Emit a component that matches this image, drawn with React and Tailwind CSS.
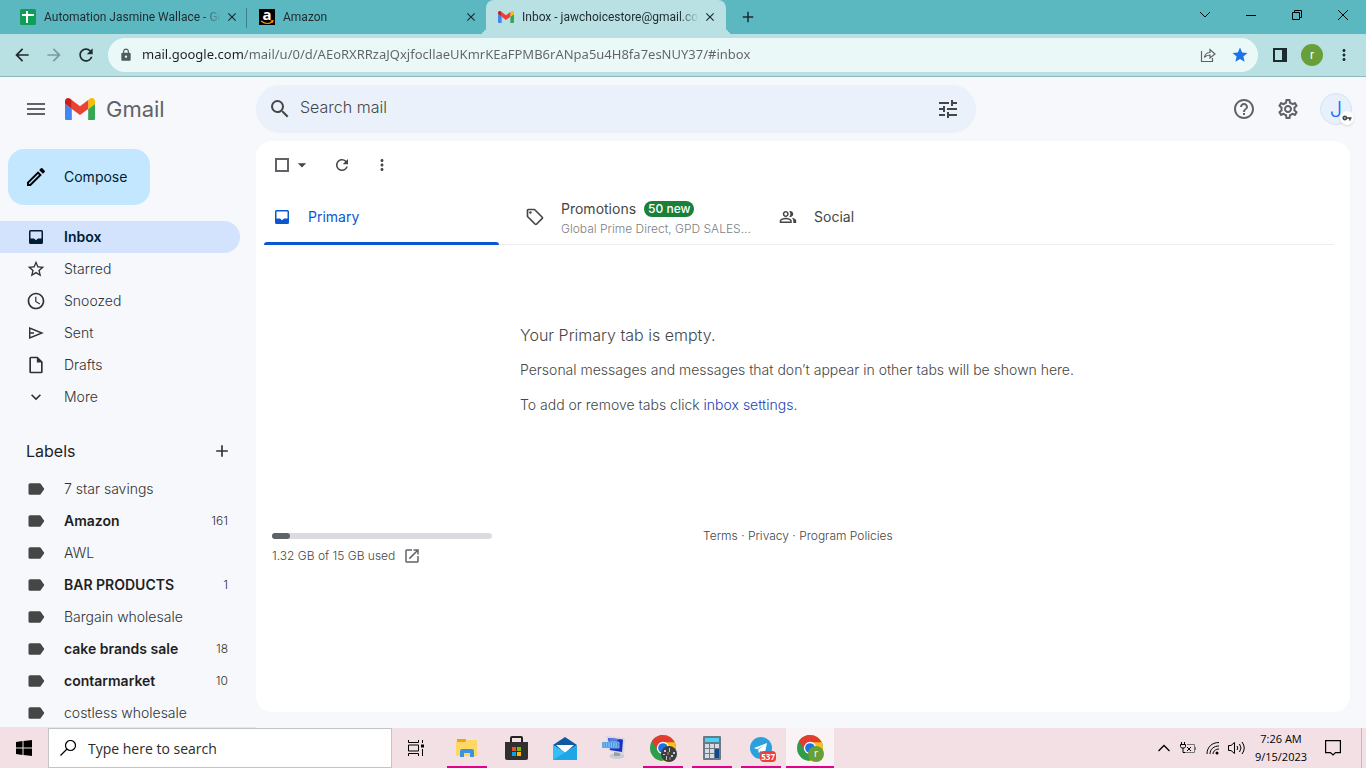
import React, { useState } from 'react';
import clsx from 'clsx';
import {
  MdAdd,
  MdArrowBack,
  MdArrowDropDown,
  MdArrowForward,
  MdClose,
  MdExpandMore,
  MdHelpOutline,
  MdLabel,
  MdLock,
  MdMenu,
  MdMoreVert,
  MdOpenInNew,
  MdOutlineInsertDriveFile,
  MdOutlineLocalOffer,
  MdOutlineModeEdit,
  MdOutlinePeopleAlt,
  MdOutlineSettings,
  MdRefresh,
  MdSchedule,
  MdSearch,
  MdStar,
  MdStarBorder,
  MdTune,
  MdVpnKey,
} from 'react-icons/md';

const InboxIcon = ({ size }) => (
  <svg viewBox="0 0 20 20" width={size} height={size} fill="currentColor" aria-hidden="true">
    <path fillRule="evenodd" d="M4.500 3h11A1.500 1.500 0 0 1 17 4.500v11a1.500 1.500 0 0 1-1.500 1.500h-11A1.500 1.500 0 0 1 3 15.500v-11A1.500 1.500 0 0 1 4.500 3zm0 1.500v7H8l2 1.700 2-1.700h3.500v-7z" />
  </svg>
);

const SendIcon = ({ size }) => (
  <svg viewBox="0 0 20 20" width={size} height={size} fill="none" stroke="currentColor" strokeWidth="1.4" aria-hidden="true">
    <path d="M3.700 5v10L16 10zM3.700 10H8" />
  </svg>
);

const folders = [
  { name: 'Inbox', icon: InboxIcon },
  { name: 'Starred', icon: MdStarBorder },
  { name: 'Snoozed', icon: MdSchedule },
  { name: 'Sent', icon: SendIcon },
  { name: 'Drafts', icon: MdOutlineInsertDriveFile },
  { name: 'More', icon: MdExpandMore },
];

const labels = [
  { name: '7 star savings' },
  { name: 'Amazon', unread: 161 },
  { name: 'AWL' },
  { name: 'BAR PRODUCTS', unread: 1 },
  { name: 'Bargain wholesale' },
  { name: 'cake brands sale', unread: 18 },
  { name: 'contarmarket', unread: 10 },
  { name: 'costless wholesale' },
];

const GmailLogo = ({ className }) => (
  <svg viewBox="52 42 88 66" className={className} aria-hidden="true">
    <path fill="#4285f4" d="M58 108h14V74L52 59v43c0 3.32 2.69 6 6 6" />
    <path fill="#34a853" d="M120 108h14c3.32 0 6-2.69 6-6V59l-20 15" />
    <path fill="#fbbc04" d="M120 48v26l20-15v-8c0-7.42-8.47-11.65-14.4-7.2" />
    <path fill="#ea4335" d="M72 74V48l24 18 24-18v26L96 92" />
    <path fill="#c5221f" d="M52 51v8l20 15V48l-5.6-4.2c-5.94-4.45-14.4-.22-14.4 7.2" />
  </svg>
);

const SheetsIcon = () => (
  <svg viewBox="0 0 16 16" className="size-4 shrink-0" aria-hidden="true">
    <rect width="16" height="16" rx="1.5" fill="#0f9d58" />
    <path d="M2 6h12M7 2v12" stroke="#fff" strokeWidth="2" />
  </svg>
);

const AmazonIcon = () => (
  <svg viewBox="0 0 16 16" className="size-4 shrink-0" aria-hidden="true">
    <rect width="16" height="16" fill="#000" />
    <text x="8" y="11" textAnchor="middle" fontSize="15" fontWeight="700" fill="#fff" fontFamily="Open Sans, sans-serif">a</text>
    <path d="M2 12c4 3 8 3 11 1M11.5 12l2.5-.2-.8 2" fill="none" stroke="#f90" strokeWidth="1.2" />
  </svg>
);

const ChromeIcon = () => (
  <svg viewBox="4 4 40 40" className="size-[26px]" aria-hidden="true">
    <circle cx="24" cy="24" r="20" fill="#2e9e4a" />
    <path fill="#fbc116" d="M24 4v20l8 4-8.8 16h.8c11 0 20-9 20-20S35 4 24 4z" />
    <path fill="#e33b2e" d="M41.8 15H24v13l-3-1-5 1.1L7.1 13.3C10.7 7.7 16.9 4 24 4c7.8 0 14.6 4.5 17.8 11z" />
    <circle cx="24" cy="24" r="9.5" fill="#fff" />
    <circle cx="24" cy="24" r="7.5" fill="#1a73e8" />
  </svg>
);

const FolderIcon = () => (
  <svg viewBox="0 0 22 20" className="h-5 w-[22px]" aria-hidden="true">
    <path fill="#e8a90c" d="M1 1h9v4H1z" />
    <path fill="#ffd764" d="M0 4h9l2-2h10v16H0z" />
    <path fill="#3d93d9" d="M4 19v-6q0-2 2-2h10q2 0 2 2v6h-4v-4H8v4z" />
  </svg>
);

const StoreIcon = () => (
  <svg viewBox="0 0 23 24" className="h-6 w-[23px]" aria-hidden="true">
    <path d="M6 7V2q0-1 1-1h9q1 0 1 1v5" fill="none" stroke="#222" strokeWidth="2" />
    <path fill="#303030" d="M0 6h23v16q0 2-2 2H2q-2 0-2-2z" />
    <path fill="#f25022" d="M7 11h4v4H7z" />
    <path fill="#7fba00" d="M12 11h4v4h-4z" />
    <path fill="#00a4ef" d="M7 16h4v4H7z" />
    <path fill="#ffb900" d="M12 16h4v4h-4z" />
  </svg>
);

const MailIcon = () => (
  <svg viewBox="0 0 24 23" className="h-[23px] w-6" aria-hidden="true">
    <path fill="#0c59a4" d="M0 8 12 0l12 8-12 8z" />
    <path fill="#fff" d="M3 8h18l-9 8z" />
    <path fill="#1fa6e6" d="m0 8 12 7.5L24 8v15H0z" />
    <path fill="#35c0f5" d="M0 8v15L12 15.5z" />
  </svg>
);

const RemoteIcon = () => (
  <svg viewBox="0 0 24 24" className="size-6" aria-hidden="true">
    <ellipse cx="15" cy="20" rx="7.5" ry="3" fill="#c9ccd0" />
    <path fill="#9aa0a8" d="m12 15 6 1v4h-6z" />
    <path fill="#d5dae0" d="m4 0 19 2-1 16L7 15z" />
    <path fill="#1d2fc0" d="m6 2 15 1.500-1 12.500-12-2z" />
    <path fill="#5878e8" d="m6 2 11 1-7 7z" />
    <path fill="#3a8fe0" stroke="#bfe0fa" strokeWidth=".6" d="M0 6h17v6H0z" />
    <path stroke="#d6ecff" strokeDasharray="1.4 1" d="M1.5 8h14M1.5 10h14" />
  </svg>
);

const CalculatorIcon = () => (
  <svg viewBox="0 0 18 24" className="h-6 w-[18px]" aria-hidden="true">
    <rect width="18" height="24" rx="1" fill="#6b7885" />
    <path fill="#45d4f8" d="M2 2h14v4H2z" />
    <path fill="#d5dce3" d="M2 8h4v4H2zM7 8h4v4H7zM12 8h4v4h-4zM2 13h4v4H2zM7 13h4v4H7zM2 18h4v4H2zM7 18h4v4H7z" />
    <path fill="#0d4a94" d="M12 13h4v9h-4z" />
  </svg>
);

const TelegramIcon = () => (
  <svg viewBox="0 0 22 22" className="size-[22px]" aria-hidden="true">
    <circle cx="11" cy="11" r="11" fill="#2ba0dc" />
    <path fill="#fff" d="M4 11 17 6l-2.3 11-4-3-2 2-.5-3.4L14 8.5 7 12.2z" />
  </svg>
);

const taskbarApps = [
  { name: 'File Explorer', icon: <FolderIcon />, running: true },
  { name: 'Microsoft Store', icon: <StoreIcon /> },
  { name: 'Mail', icon: <MailIcon /> },
  { name: 'Remote Desktop', icon: <RemoteIcon /> },
  { name: 'Chrome', icon: <ChromeIcon />, running: true, badge: 'photo' },
  { name: 'Calculator', icon: <CalculatorIcon />, running: true },
  { name: 'Telegram', icon: <TelegramIcon />, running: true, badge: 'count' },
  { name: 'Chrome, second profile', icon: <ChromeIcon />, running: true, active: true, badge: 'profile' },
];

const BrowserTab = ({ icon, title, active, divider }) => (
  <div
    className={clsx(
      'relative flex items-center pl-3',
      active
        ? "w-60 rounded-t-lg bg-[#b9e1e4] pr-[9px] before:absolute before:bottom-0 before:-left-2 before:size-2 before:rounded-br-lg before:shadow-[4px_4px_0_0_#b9e1e4] before:content-[''] after:absolute after:-right-2 after:bottom-0 after:size-2 after:rounded-bl-lg after:shadow-[-4px_4px_0_0_#b9e1e4] after:content-['']"
        : 'w-[239px] pr-2'
    )}
  >
    {icon}
    <span className="ml-2 flex-1 overflow-hidden whitespace-nowrap text-[12px] [mask-image:linear-gradient(90deg,#000_calc(100%-20px),transparent)]">
      {title}
    </span>
    <button aria-label={`Close ${title}`} className="ml-1 shrink-0">
      <MdClose size={14} />
    </button>
    {divider && <span className="absolute right-0 top-2 h-5 w-px bg-[#3f7f88]" />}
  </div>
);

const BrowserChrome = () => (
  <header className="shrink-0 font-['Roboto',sans-serif] text-[#1f2a2e]">
    <div className="flex h-[34px] bg-[#5bb8c1] pl-2">
      <BrowserTab icon={<SheetsIcon />} title="Automation Jasmine Wallace - Go" divider />
      <BrowserTab icon={<AmazonIcon />} title="Amazon" />
      <BrowserTab icon={<GmailLogo className="w-4 shrink-0" />} title="Inbox - jawchoicestore@gmail.co" active />
      <button aria-label="New tab" className="ml-[13px]">
        <MdAdd size={18} />
      </button>
      <div className="ml-auto flex items-center pb-1 text-black">
        {/* window controls */}
        <button aria-label="Search tabs" className="flex w-[46px] justify-center">
          <svg viewBox="0 0 12 12" className="size-3" fill="none" stroke="currentColor"><path d="m1 3 5 5 5-5" /></svg>
        </button>
        <button aria-label="Minimize" className="flex w-[46px] justify-center">
          <svg viewBox="0 0 10 10" className="size-[10px]" fill="none" stroke="currentColor"><path d="M0 5.5h10" /></svg>
        </button>
        <button aria-label="Restore" className="flex w-[46px] justify-center">
          <svg viewBox="0 0 10 10" className="size-[10px]" fill="none" stroke="currentColor"><path d="M.5 2.5h7v7h-7zM2.5 2.5V.5h7v7h-2" /></svg>
        </button>
        <button aria-label="Close" className="flex w-[46px] justify-center">
          <svg viewBox="0 0 10 10" className="size-[10px]" fill="none" stroke="currentColor"><path d="m0 0 10 10M10 0 0 10" /></svg>
        </button>
      </div>
    </div>
    <div className="flex h-[43px] items-center border-b border-[#8fb8ba] bg-[#b9e1e4] pl-3 pr-[13px]">
      <button aria-label="Back"><MdArrowBack size={20} /></button>
      <button aria-label="Forward" className="ml-3 text-[#7c9a9d]"><MdArrowForward size={20} /></button>
      <button aria-label="Reload" className="ml-3"><MdRefresh size={20} /></button>
      <div className="ml-3 flex h-[34px] flex-1 items-center rounded-full bg-[#ebf8f8] pl-[11px] pr-[9px]">
        <MdLock size={14} className="shrink-0 text-[#4f5b5f]" />
        <input
          aria-label="Address"
          defaultValue="mail.google.com/mail/u/0/d/AEoRXRRzaJQxjfocllaeUKmrKEaFPMB6rANpa5u4H8fa7esNUY37/#inbox"
          className="ml-[9px] min-w-0 flex-1 bg-[linear-gradient(90deg,#202124_101px,#5f6368_101px)] bg-clip-text font-['Noto_Sans',sans-serif] text-[13px] text-transparent outline-none"
        />
        <button aria-label="Share" className="mr-[15px] text-[#5f6368]">
          <svg viewBox="0 0 16 16" className="size-4" fill="none" stroke="currentColor" strokeWidth="1.2">
            <path d="M1.5 4v10.500h11V11M4.5 10.5C5 7 7 5.500 10 5.500V2.500l5 4.500-5 4V8c-2.500 0-4 .5-5.500 2.500z" />
          </svg>
        </button>
        <button aria-label="Bookmark" className="text-[#1a73e8]"><MdStar size={18} /></button>
      </div>
      <button aria-label="Side panel" className="ml-[15px]">
        <svg viewBox="0 0 14 14" className="size-[14px]"><path d="M1 1h12v12H1z" fill="none" stroke="currentColor" strokeWidth="2" /><path d="M9 1h4v12H9z" fill="currentColor" /></svg>
      </button>
      <button aria-label="Profile" className="ml-[14px] size-[22px] rounded-full bg-[#689f38] text-[12px] leading-[20px] text-white">r</button>
      <button aria-label="Browser menu" className="ml-3"><MdMoreVert size={18} /></button>
    </div>
  </header>
);

const GmailHeader = () => (
  <div className="flex h-16 shrink-0 items-center pr-[14px]">
    <div className="flex w-64 shrink-0 items-center pl-6 text-[#5f6368]">
      <button aria-label="Main menu"><MdMenu size={24} /></button>
      <GmailLogo className="ml-[17px] w-[30px]" />
      <span className="ml-[11px] text-[22px]">Gmail</span>
    </div>
    <form className="flex h-12 w-[720px] items-center rounded-full bg-[#eaf1fb] px-3 text-[#444746]">
      <button type="button" aria-label="Search"><MdSearch size={24} /></button>
      <input aria-label="Search mail" placeholder="Search mail" className="ml-2 min-w-0 flex-1 pb-1 text-[16px] font-light outline-none placeholder:text-[#444746]" />
      <button type="button" aria-label="Search options" className="mr-1"><MdTune size={24} /></button>
    </form>
    <div className="ml-auto flex items-center text-[#5f6368]">
      <button aria-label="Support"><MdHelpOutline size={24} /></button>
      <button aria-label="Settings" className="ml-5"><MdOutlineSettings size={24} /></button>
      <button aria-label="Account" className="relative ml-5 size-8 rounded-full border border-[#d8e2f3] bg-[#e8f0fe] text-[22px] font-light leading-[30px] text-[#1a73e8]">
        J
        <span className="absolute -bottom-px -right-[3px] flex size-[14px] items-center justify-center rounded-full bg-white text-[#444746] shadow">
          <MdVpnKey size={10} />
        </span>
      </button>
    </div>
  </div>
);

const Sidebar = ({ selected, onSelect }) => (
  <aside className="w-64 shrink-0 overflow-hidden border-b border-[#e4e6ea] pt-2 text-[14px] leading-5 text-[#303232]">
    <button className="ml-2 flex h-14 w-[142px] items-center rounded-2xl bg-[#c2e7ff] pl-4 text-[#001d35]">
      <MdOutlineModeEdit size={24} className="text-black" />
      <span className="ml-4">Compose</span>
    </button>
    <nav className="mt-4 pr-4">
      {folders.map(({ name, icon: Icon }) => (
        <a
          key={name}
          href={`#${name.toLowerCase()}`}
          onClick={() => onSelect(name)}
          className={clsx(
            'flex h-8 items-center rounded-r-full pl-[26px]',
            selected === name ? 'bg-[#d3e3fd] font-semibold text-[#001d35]' : 'font-light'
          )}
        >
          <Icon size={20} />
          <span className="ml-[18px]">{name}</span>
        </a>
      ))}
    </nav>
    <div className="mt-[22px] flex h-8 items-center justify-between pl-[26px] pr-6">
      <h2 className="text-[16px] leading-6 text-[#1f1f1f]">Labels</h2>
      <button aria-label="Create new label"><MdAdd size={20} /></button>
    </div>
    <nav className="mt-[6px]">
      {labels.map((label) => (
        <a key={label.name} href="#label" className="flex h-8 items-center pl-[26px] pr-7">
          <MdLabel size={20} className="text-[#444746]" />
          <span className={clsx('ml-[18px] flex-1', label.unread ? 'font-semibold text-[#1f1f1f]' : 'font-light')}>{label.name}</span>
          {label.unread && <span className="text-[12px] font-light">{label.unread}</span>}
        </a>
      ))}
    </nav>
  </aside>
);

const MailPanel = () => (
  <main className="mb-4 mr-4 flex flex-1 flex-col rounded-2xl bg-white text-[14px] text-[#444746]">
    <div className="flex h-12 shrink-0 items-center pl-[19px]">
      <input type="checkbox" aria-label="Select all" className="size-[14px] appearance-none border-2 border-[#5f6368]" />
      <button aria-label="Select" className="ml-[3px]"><MdArrowDropDown size={20} /></button>
      <button aria-label="Refresh" className="ml-[21px]"><MdRefresh size={18} /></button>
      <button aria-label="More" className="ml-[22px]"><MdMoreVert size={18} /></button>
    </div>
    <div role="tablist" className="ml-2 mr-4 flex h-14 shrink-0 border-b border-[#eceff1] text-left">
      <button role="tab" aria-selected="true" className="relative flex w-[253px] items-center pl-2 text-[#0b57d0]">
        <InboxIcon size={20} />
        <span className="ml-4">Primary</span>
        <span className="absolute -bottom-px left-0 h-[3px] w-[235px] rounded-t-sm bg-[#0b57d0]" />
      </button>
      <button role="tab" aria-selected="false" className="flex w-[253px] items-center pl-2">
        <MdOutlineLocalOffer size={20} className="shrink-0" />
        <span className="ml-4 flex flex-col pt-1">
          <span className="flex items-center leading-5">
            Promotions
            <span className="ml-2 rounded-full bg-[#188038] px-1 text-[12px] font-medium leading-4 text-white">50 new</span>
          </span>
          <span className="text-[12px] font-light leading-5 text-[#7d7f81]">Global Prime Direct, GPD SALES...</span>
        </span>
      </button>
      <button role="tab" aria-selected="false" className="flex w-[253px] items-center pl-[9px]">
        <MdOutlinePeopleAlt size={18} />
        <span className="ml-[17px]">Social</span>
      </button>
    </div>
    <div className="mx-auto mt-[78px] w-[566px] font-light leading-6">
      <p className="text-[16px]">Your Primary tab is empty.</p>
      <p className="mt-[11px] whitespace-nowrap">Personal messages and messages that don’t appear in other tabs will be shown here.</p>
      <p className="mt-[11px]">
        To add or remove tabs click <a href="#settings" className="text-[#1a3fb5]">inbox settings</a>.
      </p>
    </div>
    <footer className="mt-[108px] flex px-4 text-[12px] font-light">
      <div className="w-[220px] pt-2">
        <div className="h-[6px] rounded-full bg-[#dadce0]">
          <div className="h-full rounded-full bg-[#5f6368]" style={{ width: `${(1.32 / 15) * 100 - 0.6}%` }} />
        </div>
        <div className="mt-2 flex items-center">
          1.32 GB of 15 GB used
          <a href="#storage" aria-label="Manage storage" className="ml-2 text-[#5f6368]"><MdOpenInNew size={18} /></a>
        </div>
      </div>
      <div className="ml-[211px] leading-[22px]">
        <a href="#terms">Terms</a> · <a href="#privacy">Privacy</a> · <a href="#policies">Program Policies</a>
      </div>
    </footer>
  </main>
);

const Taskbar = () => (
  <footer className="flex h-10 shrink-0 bg-[#f2e0e4] font-['Open_Sans',sans-serif] text-black">
    <button aria-label="Start" className="flex w-12 items-center justify-center">
      <svg viewBox="0 0 16 16" className="size-4"><path d="m0 2 6.500-1v6.500H0zM7.500 1 16 0v7.500H7.500zM0 8.500h6.500V15L0 14zM7.500 8.500H16V16l-8.500-1z" /></svg>
    </button>
    <label className="flex w-[344px] items-center border border-[#c4c4c4] bg-white pl-[11px]">
      <svg viewBox="0 0 16 16" className="size-4" fill="none" stroke="currentColor" strokeWidth="1.2"><circle cx="10.5" cy="5.5" r="5" /><path d="M7 9 .5 15.500" /></svg>
      <input aria-label="Type here to search" placeholder="Type here to search" className="ml-3 min-w-0 flex-1 text-[14px] outline-none placeholder:text-[#2b2b2b]" />
    </label>
    <button aria-label="Task view" className="mr-[3px] flex w-12 items-center justify-center">
      <svg viewBox="0 0 16 16" className="size-4" fill="none" stroke="currentColor">
        <path d="M.5 0v2.500h10V0M.5 16v-2.500h10V16M.5 5h10v6H.5zM14.500 0v3M14.500 9v7" />
        <path d="M13 4.500h3v3h-3z" fill="currentColor" stroke="none" />
      </svg>
    </button>
    <div className="flex gap-px">
      {taskbarApps.map((app) => (
        <button
          key={app.name}
          aria-label={app.name}
          className={clsx('relative flex w-12 items-center justify-center', app.active && 'bg-[#faf3f5]')}
        >
          {app.icon}
          {app.badge === 'photo' && (
            <svg viewBox="0 0 16 16" className="absolute bottom-[6px] right-[10px] size-4" aria-hidden="true">
              <circle cx="8" cy="8" r="8" fill="#3b3e42" />
              <path d="M3 4h2v2H3zM8 2h1v4H8zM12 6h2v2h-2zM5 10h1v4H5zM2 8h2v1H2zM10 9h2v2h-2z" fill="#c3c9ce" />
              <path d="M6 6h2v3H6zM8 11h2v3H8z" fill="#84674f" />
            </svg>
          )}
          {app.badge === 'count' && (
            <span className="absolute bottom-[6px] right-[9px] rounded-sm bg-[#f23c34] px-px text-[8px] font-bold leading-[11px] text-white">537</span>
          )}
          {app.badge === 'profile' && (
            <span className="absolute bottom-[6px] right-[10px] size-4 rounded-full bg-[#689f38] text-[10px] leading-[14px] text-white">r</span>
          )}
          {app.running && (
            <span className={clsx('absolute bottom-0 h-[2px] bg-[#e3008c]', app.active ? 'inset-x-0' : 'inset-x-1')} />
          )}
        </button>
      ))}
    </div>
    <div className="ml-auto flex items-center">
      <button aria-label="Show hidden icons">
        <svg viewBox="0 0 12 8" className="h-2 w-3" fill="none" stroke="currentColor" strokeWidth="1.3"><path d="m.5 7 5.500-5.500L11.500 7" /></svg>
      </button>
      <button aria-label="Battery" className="ml-[10px]">
        <svg viewBox="0 0 16 12" className="h-3 w-4" fill="none" stroke="currentColor">
          <path d="M1.500 0v2M4.500 0v2M.5 2.500h5v2l-1 1.500h-3L.5 4.500zM3 6v4.500h2M7 5l4 4M11 5 7 9" />
          <path d="M7 2.500h7.500v8H5M15.500 5v3" stroke="#777" />
        </svg>
      </button>
      <button aria-label="Network" className="ml-[10px]">
        <svg viewBox="0 0 14 14" className="size-[14px]" fill="none" stroke="currentColor">
          <path d="M1 13C1 6 6 1.500 13 1.500M4 13c0-5 4-8 9-8M7 13c0-3 3-5 6-5" />
          <circle cx="11" cy="12" r="1.5" fill="currentColor" stroke="none" />
        </svg>
      </button>
      <button aria-label="Volume" className="ml-2">
        <svg viewBox="0 0 17 14" className="h-[14px] w-[17px]" fill="none" stroke="currentColor">
          <path d="M.5 4.500H3l3.500-3v11l-3.500-3H.5zM9 5q1.500 2 0 4M11.500 3q3 4 0 8M14 1q4.500 6 0 12" />
        </svg>
      </button>
      <div className="ml-[2px] w-[68px] text-center text-[11px] leading-[18px]">
        <div>7:26 AM</div>
        <div>9/15/2023</div>
      </div>
      <button aria-label="Notifications" className="ml-[10px]">
        <svg viewBox="0 0 16 16" className="size-4" fill="none" stroke="currentColor" strokeWidth="1.2"><path d="M.6.6h14.800v12H10.500L8 15l-2.500-2.400H.6z" /></svg>
      </button>
      <span className="ml-5 mr-1 h-10 w-px bg-[#c9b6bc]" />
    </div>
  </footer>
);

const App = () => {
  const [selected, setSelected] = useState('Inbox');

  return (
    <div className="flex h-screen flex-col overflow-hidden bg-[#f6f8fc] font-['Inter',sans-serif]">
      <BrowserChrome />
      <GmailHeader />
      <div className="flex min-h-0 flex-1">
        <Sidebar selected={selected} onSelect={setSelected} />
        <MailPanel />
      </div>
      <Taskbar />
    </div>
  );
};

export default App;
